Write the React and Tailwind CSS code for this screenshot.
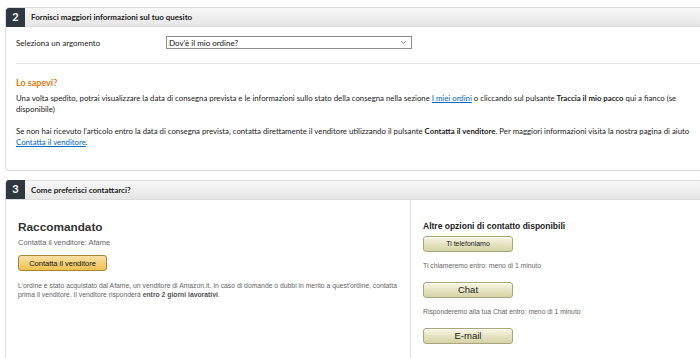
// App.jsx
const sans = { fontFamily: '"Lato", "Open Sans", sans-serif' };
const arial = { fontFamily: '"Liberation Sans", Arial, sans-serif' };

function StepHeader({ n, title }) {
  return (
    <div className="flex h-[19px] items-center bg-gradient-to-b from-[#f7f7f7] to-[#e6e6e6] border-b border-[#dcdcdc]">
      <div className="flex h-[19px] w-[19px] items-center justify-center rounded-tl-[3px] bg-[#2f3841] text-[11px] font-bold text-white">
        {n}
      </div>
      <div className="ml-[6px] text-[8px] font-bold text-[#222]">{title}</div>
    </div>
  );
}

function BeigeButton({ children, big }) {
  return (
    <div
      className={`flex h-[16px] w-[90px] items-center justify-center rounded-[3px] border border-[#a9a57e] bg-gradient-to-b from-[#f8f6e3] to-[#d6d2a6] shadow-[inset_0_1px_0_#fff] text-[#222] ${big ? "text-[9.5px]" : "text-[7px]"}`}
      style={arial}
    >
      {children}
    </div>
  );
}

export default function App() {
  return (
    <div className="h-[358px] w-[700px] overflow-hidden bg-white pl-[5px] pt-[7px]">
      {/* STEP 2 */}
      <section className="w-[720px] rounded-[4px] border border-[#dcdcdc]" style={sans}>
        <StepHeader n="2" title="Fornisci maggiori informazioni sul tuo quesito" />
        <div className="pl-[10px] pr-[24px]">
          <div className="flex items-center pt-[9px]">
            <div className="w-[150px] text-[8px] text-[#222]">Seleziona un argomento</div>
            <div className="flex h-[13px] w-[246px] items-center justify-between border border-[#8e8e8e] pl-[2px] pr-[4px] text-[8px] text-[#111]">
              <span>Dov'è il mio ordine?</span>
              <svg width="7" height="5" viewBox="0 0 7 5" fill="none">
                <path d="M1 1 L3.5 3.5 L6 1" stroke="#777" strokeWidth="0.8" />
              </svg>
            </div>
          </div>
          <div className="mt-[14px] -mr-[24px] border-t border-[#e3e3e3]" />
          <div className="mt-[12px] text-[9px] font-bold text-[#e47911]">Lo sapevi?</div>
          <p className="mt-[3px] text-[7.8px] leading-[11px] text-[#222]">
            Una volta spedito, potrai visualizzare la data di consegna prevista e le informazioni sullo stato della consegna nella sezione{" "}
            <span className="text-[#0066c0] underline">I miei ordini</span> o cliccando sul pulsante{" "}
            <b>Traccia il mio pacco</b> qui a fianco (se disponibile)
          </p>
          <p className="mt-[11px] pb-[22px] text-[7.8px] leading-[11px] text-[#222]">
            Se non hai ricevuto l'articolo entro la data di consegna prevista, contatta direttamente il venditore utilizzando il pulsante{" "}
            <b>Contatta il venditore</b>. Per maggiori informazioni visita la nostra pagina di aiuto{" "}
            <span className="text-[#0066c0] underline">Contatta il venditore</span>.
          </p>
        </div>
      </section>

      {/* STEP 3 */}
      <section className="mt-[9px] h-[200px] w-[720px] rounded-[4px] border border-[#dcdcdc]" style={sans}>
        <StepHeader n="3" title="Come preferisci contattarci?" />
        <div className="flex h-full">
          <div className="w-[404px] pl-[12px] pt-[19px]" style={arial}>
            <div className="text-[11.8px] font-bold text-[#333]">Raccomandato</div>
            <div className="mt-[1px] text-[7.5px] text-[#666]">Contatta il venditore: Afame</div>
            <div className="mt-[7px] flex h-[16px] w-[89px] items-center justify-center rounded-[3px] border border-[#a88734] bg-gradient-to-b from-[#f7dfa5] to-[#f0c14b] text-[7.5px] text-[#111]">
              Contatta il venditore
            </div>
            <p className="mt-[10px] pr-[6px] text-[6.8px] leading-[9px] text-[#666]">
              L'ordine è stato acquistato dal Afame, un venditore di Amazon.it. In caso di domande o dubbi in merito a quest'ordine, contatta prima il venditore. Il venditore risponderà{" "}
              <b className="text-[#555]">entro 2 giorni lavorativi</b>.
            </p>
          </div>
          <div className="flex-1 border-l border-[#dcdcdc] pl-[12px] pt-[20px]" style={arial}>
            <div className="text-[8.5px] font-bold text-[#222]">Altre opzioni di contatto disponibili</div>
            <div className="mt-[4px]">
              <BeigeButton>Ti telefoniamo</BeigeButton>
            </div>
            <div className="mt-[9px] text-[6.8px] text-[#666]">Ti chiameremo entro: meno di 1 minuto</div>
            <div className="mt-[11px]">
              <BeigeButton big>Chat</BeigeButton>
            </div>
            <div className="mt-[9px] text-[6.8px] text-[#666]">Risponderemo alla tua Chat entro: meno di 1 minuto</div>
            <div className="mt-[10px]">
              <BeigeButton big>E-mail</BeigeButton>
            </div>
          </div>
        </div>
      </section>
    </div>
  );
}
